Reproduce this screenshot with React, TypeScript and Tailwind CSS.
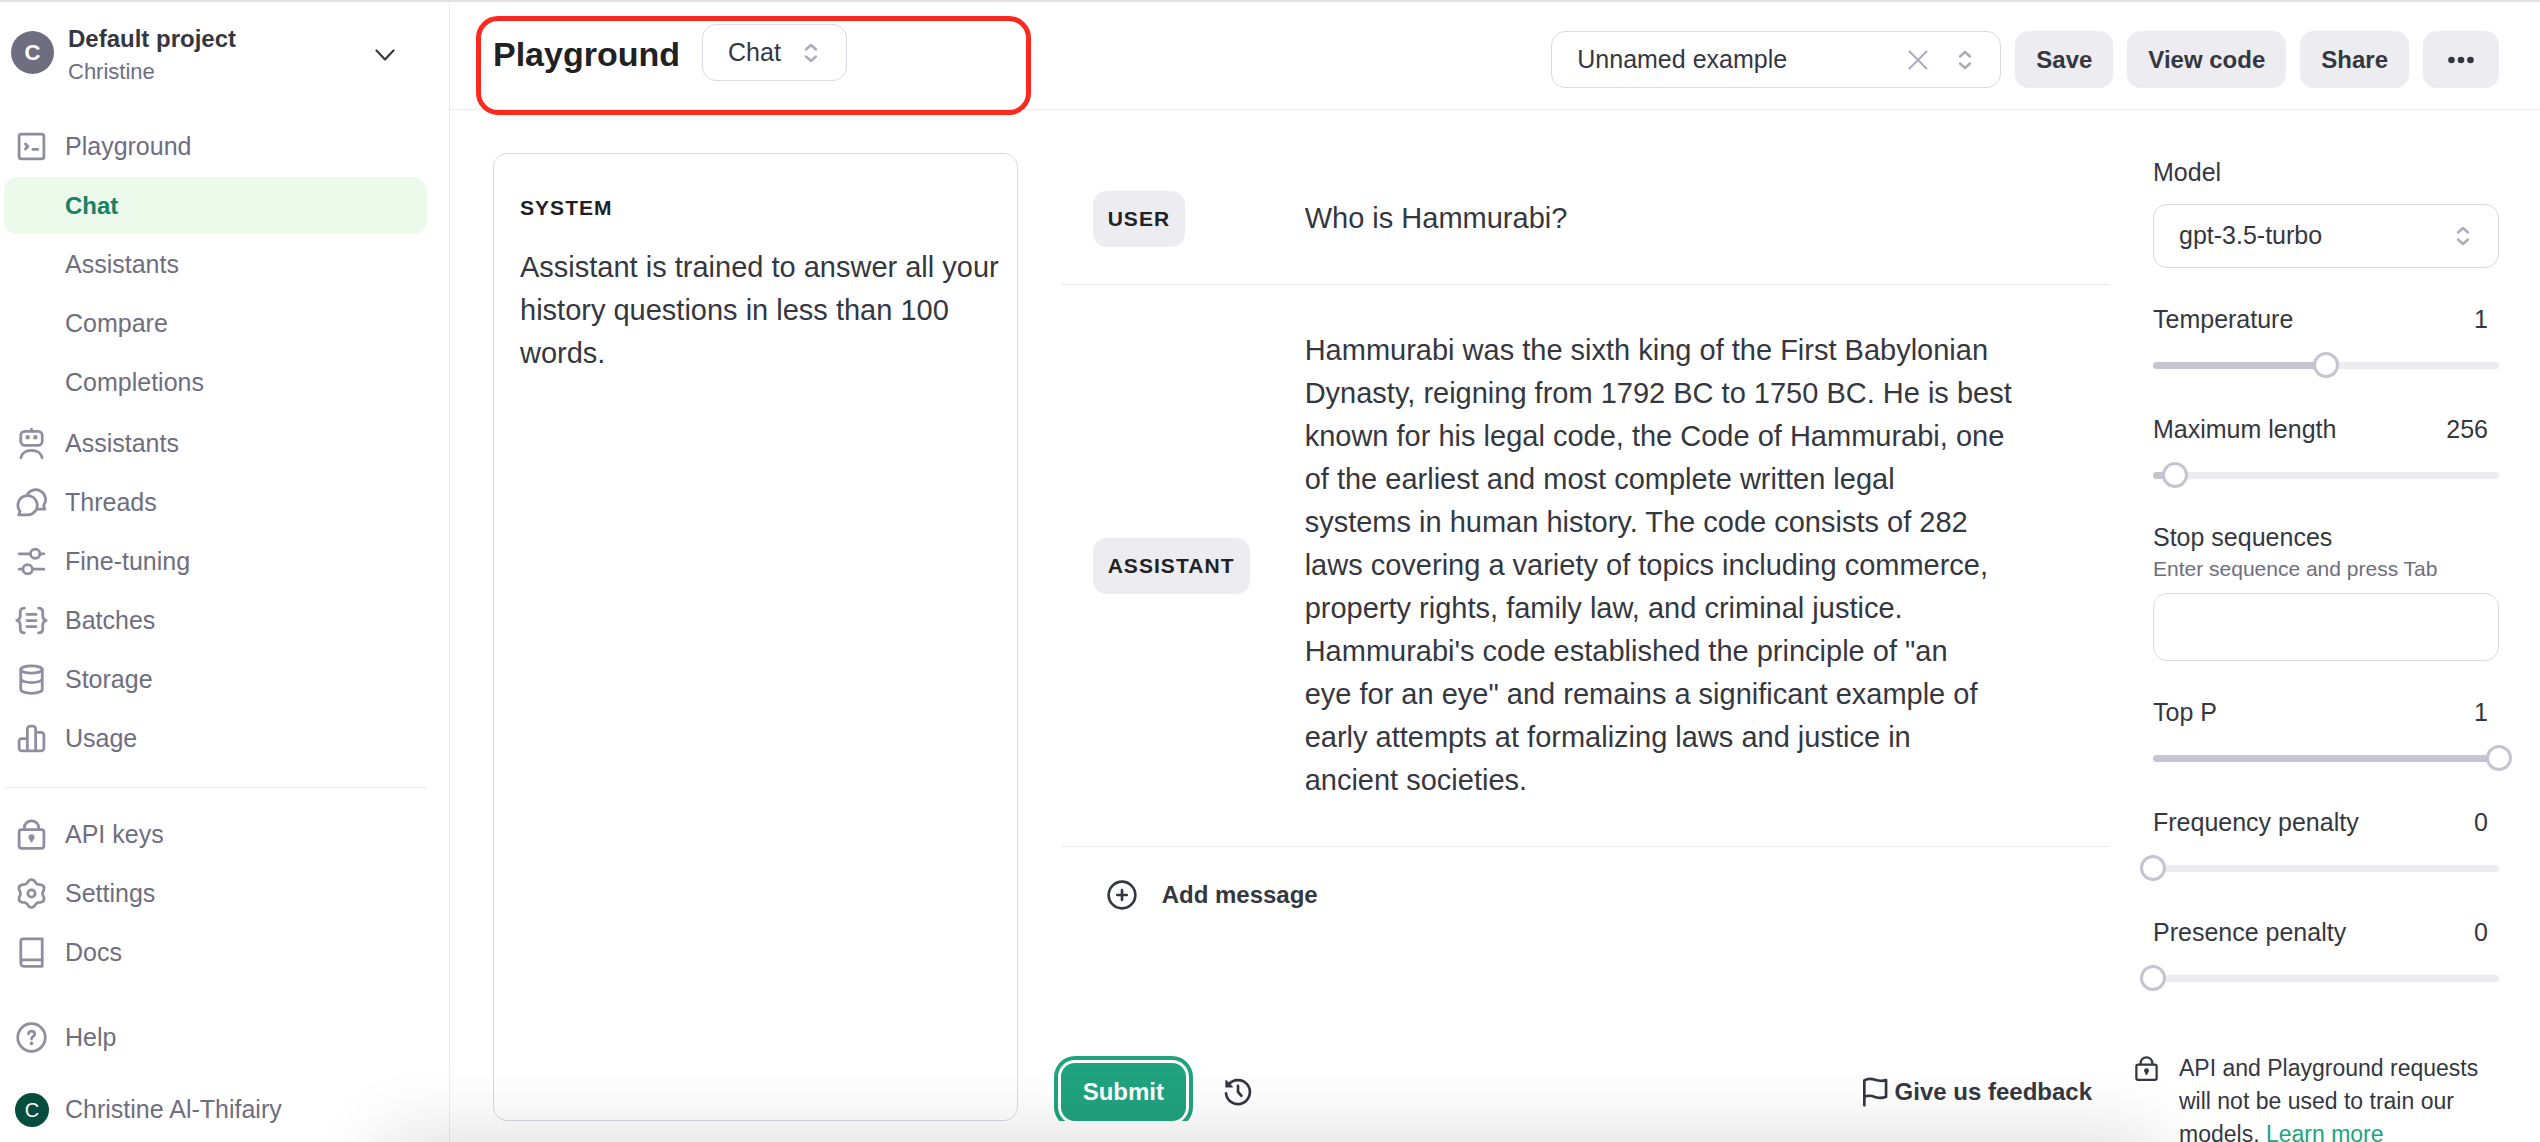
import React, { useState } from "react";

type IconProps = { size?: string; children: React.ReactNode };

function Icon({ size = "size-[33px]", children }: IconProps) {
  return (
    <svg
      viewBox="0 0 24 24"
      className={`${size} shrink-0`}
      fill="none"
      stroke="currentColor"
      strokeWidth="2"
      strokeLinecap="round"
      strokeLinejoin="round"
      aria-hidden="true"
    >
      {children}
    </svg>
  );
}

const TerminalIcon = () => (
  <Icon>
    <rect x="3" y="3" width="18" height="18" rx="1.6" />
    <path d="M7.6 10.2 9.4 12l-1.8 1.8M13 14.1h3.6" />
  </Icon>
);
const RobotIcon = () => (
  <Icon>
    <path d="M12 1.6V3" />
    <rect x="4.2" y="3.1" width="15.6" height="10.3" rx="3" />
    <path d="M4.3 22.4c.6-3.2 3.7-5.4 7.7-5.4s7.1 2.2 7.7 5.4" />
    <g fill="currentColor" stroke="none">
      <circle cx="9.2" cy="7.5" r="1.6" />
      <circle cx="14.8" cy="7.5" r="1.6" />
    </g>
  </Icon>
);
const ThreadsIcon = () => (
  <Icon>
    <path d="M9 21H2.7l1-2.6A7 7 0 1 1 9 21Z" />
    <path d="M9.2 5.6A7 7 0 1 1 20.8 14.2l.9 2.6h-5.300" />
  </Icon>
);
const TuningIcon = () => (
  <Icon>
    <path d="M3 6.4h8.3M18.2 6.4H21M3 17.6h2.8M12.6 17.6H21" />
    <circle cx="14.7" cy="6.4" r="3.4" />
    <circle cx="9.2" cy="17.6" r="3.4" />
  </Icon>
);
const BatchesIcon = () => (
  <Icon>
    <path d="M6.8 3C4.3 3 3.8 4.2 3.8 6v2.8c0 1.7-.8 2.8-2.5 3.2 1.7.4 2.5 1.5 2.5 3.2V18c0 1.8.5 3 3 3" />
    <path d="M17.2 3c2.5 0 3 1.2 3 3v2.8c0 1.7.8 2.8 2.5 3.2-1.7.4-2.5 1.5-2.5 3.2V18c0 1.8-.5 3-3 3" />
    <path d="M8.7 7.6h6.6M8.7 12h6.6M8.7 16.4h6.6" />
  </Icon>
);
const StorageIcon = () => (
  <Icon>
    <ellipse cx="12" cy="4.7" rx="7.8" ry="2.7" />
    <path d="M4.2 4.7v14.6C4.2 20.8 7.7 22 12 22s7.8-1.2 7.8-2.7V4.7M4.2 11.5c0 1.5 3.5 2.7 7.8 2.7s7.8-1.2 7.8-2.7" />
  </Icon>
);
const UsageIcon = () => (
  <Icon>
    <path d="M9 21V5a2 2 0 0 1 2-2h2a2 2 0 0 1 2 2v16M9 12H5a2 2 0 0 0-2 2v5a2 2 0 0 0 2 2h14a2 2 0 0 0 2-2V9.500a2 2 0 0 0-2-2h-4" />
  </Icon>
);
const LockIcon = ({ size }: { size?: string }) => (
  <Icon size={size}>
    <rect x="3" y="8.5" width="18" height="13.5" rx="1.6" />
    <path d="M6.8 8.3V7.2a5.2 5.2 0 0 1 10.4 0v1.100" />
    <path d="M12 14.200v2.6" />
    <circle cx="12" cy="14" r="1.2" fill="currentColor" />
  </Icon>
);

const gearPath =
  Array.from({ length: 72 }, (_, i) => {
    const angle = (i / 72) * Math.PI * 2;
    const radius = 9.1 + 1.1 * Math.cos(6 * angle);
    const x = 12 + radius * Math.sin(angle);
    const y = 12 - radius * Math.cos(angle);
    return `${i === 0 ? "M" : "L"}${x.toFixed(2)} ${y.toFixed(2)}`;
  }).join("") + "Z";

const GearIcon = () => (
  <Icon>
    <path d={gearPath} />
    <circle cx="12" cy="12" r="2.7" />
  </Icon>
);
const BookIcon = () => (
  <Icon>
    <path d="M4.2 19.500V3.800A1.800 1.800 0 0 1 6 2h13.800v20H6.300a2.100 2.100 0 0 1-2.100-2.300c0-1.400.8-2.300 2.100-2.300h13.500" />
  </Icon>
);
const HelpIcon = () => (
  <Icon>
    <circle cx="12" cy="12" r="10" />
    <path d="M9.8 9.3c.2-1.200 1-1.900 2.300-1.900 1.300 0 2.300.8 2.300 2.100 0 1.700-2.400 1.800-2.400 3.600" />
    <circle cx="12" cy="16.300" r="1.300" fill="currentColor" stroke="none" />
  </Icon>
);
const PlusCircleIcon = () => (
  <Icon size="size-8">
    <circle cx="12" cy="12" r="10" />
    <path d="M12 8.4v7.2M8.4 12h7.2" />
  </Icon>
);
const HistoryIcon = () => (
  <Icon size="size-8">
    <path d="M3 13a9 9 0 1 0 1.700-6.300M12 7.400V12l2.600 2.800" />
    <path d="M3 3.500v4.700h4.700Z" fill="currentColor" strokeWidth="1" />
  </Icon>
);
const FlagIcon = () => (
  <Icon size="size-8">
    <path d="M4 22V3.300C6.500 1.800 9 1.800 12 2.800s5.500 1.200 8.300.2v12.500c-2.800 1.300-5.300 1.300-8.300.2s-5.500-1.300-8 0" />
  </Icon>
);
const SortIcon = () => (
  <svg
    viewBox="0 0 14 20"
    className="h-5 w-3.5 shrink-0 text-[#acacbe]"
    fill="none"
    stroke="currentColor"
    strokeWidth="2.5"
    strokeLinecap="round"
    strokeLinejoin="round"
    aria-hidden="true"
  >
    <path d="m2 6.500 5-4.500 5 4.500M2 13.500 7 18l5-4.500" />
  </svg>
);

function NavItem({ label, icon, active }: { label: string; icon?: React.ReactNode; active?: boolean }) {
  return (
    <a
      href="#"
      aria-current={active ? "page" : undefined}
      className={`flex h-[57px] items-center rounded-[14px] ${
        active ? "bg-[#ebfaeb] text-2xl font-bold text-[#1a7f64]" : "text-[25px] text-[#6e6e80]"
      }`}
    >
      <span className="flex w-[61px] justify-start pl-[11px] text-[#8e8ea0]">{icon}</span>
      {label}
    </a>
  );
}

function Sidebar() {
  return (
    <aside className="flex w-[450px] shrink-0 flex-col border-r border-[#ececec] pr-[22px] pl-1">
      <button type="button" className="mt-5 flex items-start pr-8 pl-[7px] text-left">
        <span className="mt-[9px] flex size-[43px] items-center justify-center rounded-full bg-[#6e6e80] text-[22px] font-bold text-white">
          C
        </span>
        <span className="ml-3.5 flex-1">
          <span className="block text-2xl leading-[33px] font-bold text-[#353740]">Default project</span>
          <span className="block text-[22px] leading-[33px] text-[#6e6e80]">Christine</span>
        </span>
        <svg viewBox="0 0 20 12" className="h-3 w-5 self-center text-[#353740]" fill="none" stroke="currentColor" strokeWidth="2.2" strokeLinecap="round" strokeLinejoin="round" aria-hidden="true">
          <path d="m1.500 1.500 8.500 9 8.500-9" />
        </svg>
      </button>
      <nav className="mt-[30px] flex flex-col gap-1">
        <div className="flex flex-col gap-0.5">
          <NavItem label="Playground" icon={<TerminalIcon />} />
          <NavItem label="Chat" active />
          <NavItem label="Assistants" />
          <NavItem label="Compare" />
          <NavItem label="Completions" />
        </div>
        <div className="flex flex-col gap-0.5">
          <NavItem label="Assistants" icon={<RobotIcon />} />
          <NavItem label="Threads" icon={<ThreadsIcon />} />
          <NavItem label="Fine-tuning" icon={<TuningIcon />} />
          <NavItem label="Batches" icon={<BatchesIcon />} />
          <NavItem label="Storage" icon={<StorageIcon />} />
          <NavItem label="Usage" icon={<UsageIcon />} />
        </div>
        <div className="mt-4 flex flex-col gap-0.5 border-t border-[#ececec] pt-[18px]">
          <NavItem label="API keys" icon={<LockIcon />} />
          <NavItem label="Settings" icon={<GearIcon />} />
          <NavItem label="Docs" icon={<BookIcon />} />
        </div>
      </nav>
      <div className="mt-auto flex flex-col gap-[15px] pb-1">
        <NavItem label="Help" icon={<HelpIcon />} />
        <NavItem
          label="Christine Al-Thifairy"
          icon={
            <span className="flex size-[34px] items-center justify-center rounded-full bg-[#054d3d] text-xl text-white">
              C
            </span>
          }
        />
      </div>
    </aside>
  );
}

function SelectBox({ label, options, className, trailing }: { label: string; options: string[]; className: string; trailing?: React.ReactNode }) {
  return (
    <div className={`relative flex items-center justify-end rounded-[14px] border border-[#d9d9e3] ${className}`}>
      <select aria-label={label} className="absolute inset-0 w-full cursor-pointer appearance-none rounded-[14px] bg-transparent px-[25px] text-[25px] text-[#353740]">
        {options.map((option) => (
          <option key={option}>{option}</option>
        ))}
      </select>
      {trailing}
      <SortIcon />
    </div>
  );
}

const headerButton = "flex h-[57px] items-center justify-center rounded-[14px] bg-[#ececf1] px-[21px] text-2xl font-bold text-[#353740]";

function Header() {
  return (
    <header className="relative flex h-[108px] items-start justify-between border-b border-[#ececec] pr-[41px] pl-[43px]">
      <div className="flex items-start gap-[22px] pt-[22px]">
        <h1 className="text-[34px] leading-[60px] font-bold text-[#202123]">Playground</h1>
        <SelectBox label="Mode" options={["Chat"]} className="h-[57px] w-[145px] pr-[28px]" />
      </div>
      <div className="flex items-center gap-3.5 pt-[29px]">
        <SelectBox
          label="Example"
          options={["Unnamed example"]}
          className="h-[57px] w-[450px] pr-[28px]"
          trailing={
            <button type="button" aria-label="Clear example" className="relative mr-[30px] text-[#acacbe]">
              <svg viewBox="0 0 20 20" className="size-5" fill="none" stroke="currentColor" strokeWidth="2" strokeLinecap="round" aria-hidden="true">
                <path d="m1.500 1.500 17 17M18.500 1.500l-17 17" />
              </svg>
            </button>
          }
        />
        <button type="button" className={headerButton}>Save</button>
        <button type="button" className={headerButton}>View code</button>
        <button type="button" className={headerButton}>Share</button>
        <button type="button" aria-label="More" className={headerButton}>
          <svg viewBox="0 0 34 8" className="h-2 w-[34px]" fill="currentColor" aria-hidden="true">
            <circle cx="7.500" cy="4" r="3.300" />
            <circle cx="17" cy="4" r="3.300" />
            <circle cx="26.500" cy="4" r="3.300" />
          </svg>
        </button>
      </div>
      <div className="pointer-events-none absolute top-3.5 left-[26px] h-[99px] w-[555px] rounded-[22px] border-5 border-[#ff2a1f]" />
    </header>
  );
}

const messages = [
  { role: "USER", lines: ["Who is Hammurabi?"] },
  {
    role: "ASSISTANT",
    lines: [
      "Hammurabi was the sixth king of the First Babylonian",
      "Dynasty, reigning from 1792 BC to 1750 BC. He is best",
      "known for his legal code, the Code of Hammurabi, one",
      "of the earliest and most complete written legal",
      "systems in human history. The code consists of 282",
      "laws covering a variety of topics including commerce,",
      "property rights, family law, and criminal justice.",
      "Hammurabi's code established the principle of \"an",
      "eye for an eye\" and remains a significant example of",
      "early attempts at formalizing laws and justice in",
      "ancient societies.",
    ],
  },
];

function Message({ role, lines }: { role: string; lines: string[] }) {
  return (
    <div className="flex items-center border-b border-[#ececec] py-9 pr-20 pl-8">
      <div className="w-[212px] shrink-0">
        <button type="button" className="block h-14 rounded-[14px] bg-[#ececf1] px-[15px] text-[21px] font-bold tracking-wider text-[#202123]">
          {role}
        </button>
      </div>
      <textarea
        aria-label={`${role} message`}
        defaultValue={lines.join("\n")}
        className="field-sizing-content block w-full resize-none overflow-hidden py-2 text-[29px] leading-[43px] text-[#353740]"
      />
    </div>
  );
}

function Conversation() {
  return (
    <section className="mb-[21px] flex min-h-0 flex-col overflow-y-clip">
      <div className="mt-[43px] flex-1">
        {messages.map((message) => (
          <Message key={message.role} {...message} />
        ))}
        <button type="button" className="mt-8 ml-[45px] flex items-center gap-6 text-2xl font-bold text-[#353740]">
          <PlusCircleIcon />
          Add message
        </button>
      </div>
      <div className="flex items-center text-2xl font-bold text-[#353740]">
        <button
          type="button"
          className="h-[58px] rounded-[14px] bg-[#20a37f] px-[22px] text-white ring-4 ring-[#20a37f] ring-offset-3"
        >
          Submit
        </button>
        <button type="button" aria-label="History" className="ml-9">
          <HistoryIcon />
        </button>
        <button type="button" className="mr-[18px] ml-auto flex items-center gap-1">
          <FlagIcon />
          Give us feedback
        </button>
      </div>
    </section>
  );
}

type SliderProps = { label: string; initial: number; min: number; max: number; step: number };

function Slider({ label, initial, min, max, step }: SliderProps) {
  const [value, setValue] = useState(initial);
  const id = label.toLowerCase().replace(/ /g, "-");
  const percent = ((value - min) / (max - min)) * 100;
  return (
    <div className="flex flex-col gap-[15px]">
      <div className="flex items-center justify-between pr-[11px]">
        <label htmlFor={id} className="leading-9">{label}</label>
        <output htmlFor={id} className="leading-9">{value}</output>
      </div>
      <div className="relative flex h-[26px] items-center">
        <div className="h-[7px] w-full overflow-hidden rounded-full bg-[#ececf1]">
          <div className="h-full bg-[#c5c5d2]" style={{ width: `${percent}%` }} />
        </div>
        <input
          id={id}
          type="range"
          min={min}
          max={max}
          step={step}
          value={value}
          onChange={(event) => setValue(Number(event.target.value))}
          className="absolute -left-[13px] h-[26px] w-[calc(100%+26px)] appearance-none bg-transparent [&::-webkit-slider-thumb]:size-[26px] [&::-webkit-slider-thumb]:appearance-none [&::-webkit-slider-thumb]:rounded-full [&::-webkit-slider-thumb]:border-3 [&::-webkit-slider-thumb]:border-[#c5c5d2] [&::-webkit-slider-thumb]:bg-white"
        />
      </div>
    </div>
  );
}

function Settings() {
  return (
    <aside className="flex flex-col gap-[33px] pt-11 text-[25px] text-[#353740]">
      <div>
        <div className="leading-9">Model</div>
        <SelectBox label="Model" options={["gpt-3.5-turbo"]} className="mt-3.5 h-16 pr-[28px]" />
      </div>
      <Slider label="Temperature" initial={1} min={0} max={2} step={0.01} />
      <Slider label="Maximum length" initial={256} min={1} max={4096} step={1} />
      <div>
        <label htmlFor="stop" className="block leading-8">Stop sequences</label>
        <span className="block text-[21px] leading-8 text-[#6e6e80]">Enter sequence and press Tab</span>
        <input id="stop" type="text" className="mt-2 block h-[68px] w-full rounded-[14px] border border-[#d9d9e3] px-6" />
      </div>
      <Slider label="Top P" initial={1} min={0} max={1} step={0.01} />
      <Slider label="Frequency penalty" initial={0} min={0} max={2} step={0.01} />
      <Slider label="Presence penalty" initial={0} min={0} max={2} step={0.01} />
      <div className="mt-7 -ml-5 flex items-start gap-[19px] text-[23px] leading-[33px]">
        <span className="flex h-[33px] items-center">
          <LockIcon size="size-[27px]" />
        </span>
        <p>
          API and Playground requests will not be used to train our models.{" "}
          <a href="#" className="text-[#20a37f]">Learn more</a>
        </p>
      </div>
    </aside>
  );
}

export default function App() {
  return (
    <div className="relative flex h-screen overflow-hidden border-t-2 border-[#e2e2e2] bg-white font-['Liberation_Sans',Arial,sans-serif]">
      <Sidebar />
      <main className="flex min-w-0 flex-1 flex-col">
        <Header />
        <div className="grid min-h-0 flex-1 grid-cols-[1fr_2fr_346px] grid-rows-[minmax(0,1fr)] gap-[43px] pr-[41px] pl-[43px]">
          <section className="mt-[43px] mb-[21px] flex flex-col rounded-[14px] border border-[#d9d9e3] px-[26px] pt-[38px]">
            <label htmlFor="system" className="text-[21px] leading-8 font-bold tracking-wider text-[#202123]">
              SYSTEM
            </label>
            <textarea
              id="system"
              defaultValue="Assistant is trained to answer all your history questions in less than 100 words."
              className="mt-[22px] -mr-5 flex-1 resize-none text-[29px] leading-[43px] text-[#353740]"
            />
          </section>
          <Conversation />
          <Settings />
        </div>
      </main>
      <div className="pointer-events-none absolute inset-x-[385px] top-full h-24 shadow-[0_0_80px_rgba(0,0,0,0.16)]" />
    </div>
  );
}
